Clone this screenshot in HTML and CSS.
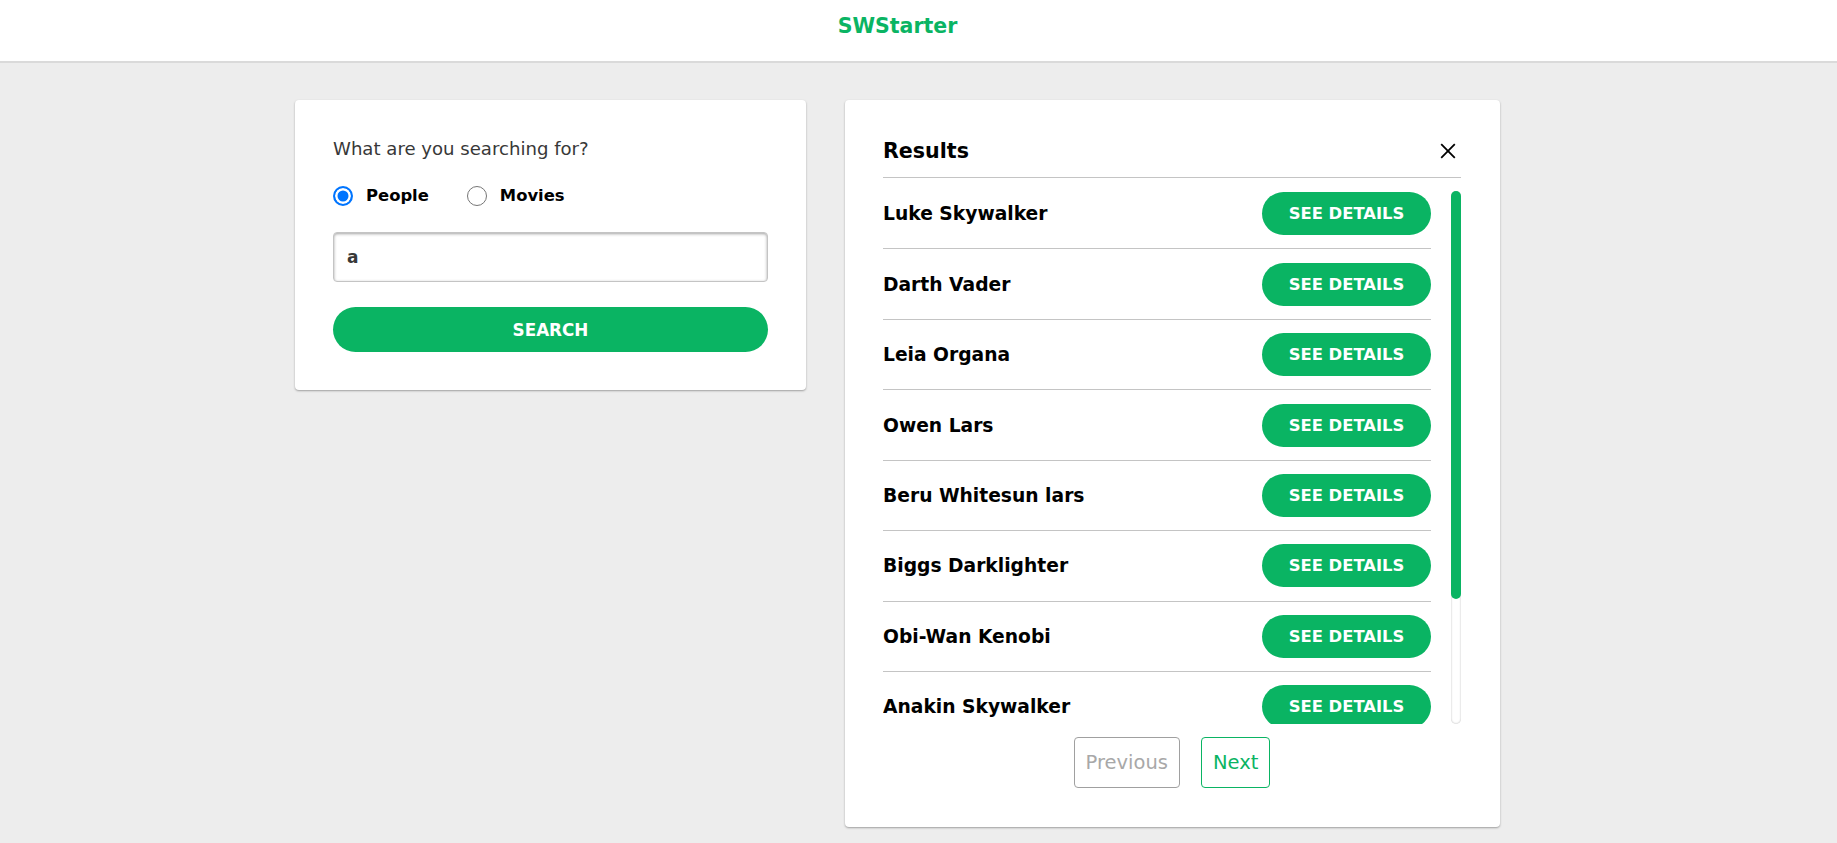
FILE: index.html
```html
<!DOCTYPE html>
<html lang="en">
<head>
<meta charset="utf-8">
<title>SWStarter</title>
<link rel="stylesheet" href="styles.css">
</head>
<body>
<header class="topbar"><span class="brand">SWStarter</span></header>
<main class="layout">
  <section class="card search-card">
    <p class="question">What are you searching for?</p>
    <div class="radios">
      <label class="radio"><input type="radio" name="kind" checked><span>People</span></label>
      <label class="radio"><input type="radio" name="kind"><span>Movies</span></label>
    </div>
    <input class="search-input" type="text" value="a">
    <button class="search-btn" type="button">SEARCH</button>
  </section>
  <section class="card results-card">
    <div class="results-head">
      <h2 class="results-title">Results</h2>
      <button class="close-btn" type="button" aria-label="Close">
        <svg width="16" height="16" viewBox="0 0 16 16"><path d="M1.2 1.2 L14.8 14.8 M14.8 1.2 L1.2 14.8" stroke="#000" stroke-width="1.8" fill="none"/></svg>
      </button>
    </div>
    <div class="results-body">
      <ul class="results-list">
        <li class="result-row"><span class="name">Luke Skywalker</span><button class="details-btn" type="button">SEE DETAILS</button></li>
        <li class="result-row"><span class="name">Darth Vader</span><button class="details-btn" type="button">SEE DETAILS</button></li>
        <li class="result-row"><span class="name">Leia Organa</span><button class="details-btn" type="button">SEE DETAILS</button></li>
        <li class="result-row"><span class="name">Owen Lars</span><button class="details-btn" type="button">SEE DETAILS</button></li>
        <li class="result-row"><span class="name">Beru Whitesun lars</span><button class="details-btn" type="button">SEE DETAILS</button></li>
        <li class="result-row"><span class="name">Biggs Darklighter</span><button class="details-btn" type="button">SEE DETAILS</button></li>
        <li class="result-row"><span class="name">Obi-Wan Kenobi</span><button class="details-btn" type="button">SEE DETAILS</button></li>
        <li class="result-row"><span class="name">Anakin Skywalker</span><button class="details-btn" type="button">SEE DETAILS</button></li>
        <li class="result-row"><span class="name">Wilhuff Tarkin</span><button class="details-btn" type="button">SEE DETAILS</button></li>
        <li class="result-row"><span class="name">Chewbacca</span><button class="details-btn" type="button">SEE DETAILS</button></li>
      </ul>
      <div class="scroll-rail" aria-hidden="true"><div class="scroll-thumb"></div></div>
    </div>
    <nav class="pager">
      <button class="pager-btn is-disabled" type="button">Previous</button>
      <button class="pager-btn is-active" type="button">Next</button>
    </nav>
  </section>
</main>
</body>
</html>
```
FILE: styles.css
```css
* { box-sizing: border-box; }

html, body { margin: 0; padding: 0; }

body {
  background: #ededed;
  font-family: "DejaVu Sans", "Liberation Sans", sans-serif;
  color: #000;
  min-height: 843px;
}

.topbar {
  height: 61px;
  padding: 16px 42px 0 0;
  background: #fff;
  text-align: center;
  box-shadow: 0 2px 0 0 #dadada;
  position: relative;
}

.brand {
  display: inline-block;
  font-size: 20.5px;
  line-height: 1;
  font-weight: bold;
  color: #0ab463;
}

.layout {
  display: flex;
  justify-content: center;
  align-items: flex-start;
  gap: 39px;
  padding: 39px 42px 0 0;
}

.card {
  background: #fff;
  border-radius: 4px;
  box-shadow: 0 1px 2px 0 rgba(132, 132, 132, 0.75);
}

.search-card {
  width: 511px;
  padding: 38px;
}

.question {
  margin: 0 0 26px;
  font-size: 18.1px;
  line-height: 22px;
  color: #383838;
}

.radios {
  display: flex;
  gap: 38px;
  height: 20px;
  margin-bottom: 26px;
}

.radio {
  display: flex;
  align-items: center;
  gap: 13px;
  font-size: 16.4px;
  font-weight: bold;
  line-height: 20px;
}

.radio input {
  appearance: none;
  -webkit-appearance: none;
  margin: 0;
  width: 20px;
  height: 20px;
  border-radius: 50%;
  border: 1.5px solid #767676;
  background: #fff;
}

.radio input:checked {
  border: 2px solid #0075ff;
  background: #0075ff;
  box-shadow: inset 0 0 0 2.5px #fff;
}

.search-input {
  display: block;
  width: 100%;
  height: 50px;
  margin: 0;
  padding: 0 13px;
  border: 1px solid #c4c4c4;
  border-radius: 4px;
  box-shadow: inset 0 1px 3px 0 rgba(132, 132, 132, 0.75);
  font-family: inherit;
  font-size: 17px;
  font-weight: bold;
  color: #383838;
  outline: none;
}

.search-btn {
  display: block;
  width: 100%;
  height: 45px;
  margin-top: 25px;
  border: 0;
  border-radius: 23px;
  background: #0ab463;
  color: #fff;
  font-family: inherit;
  font-size: 16.8px;
  font-weight: bold;
  cursor: pointer;
}

.results-card {
  width: 655px;
  padding: 38px 39px 39px 38px;
}

.results-head {
  display: flex;
  align-items: center;
  justify-content: space-between;
  padding-bottom: 13px;
  border-bottom: 1px solid #c4c4c4;
}

.results-title {
  margin: 0;
  font-size: 20.6px;
  line-height: 26px;
  font-weight: bold;
}

.close-btn {
  display: flex;
  padding: 0;
  margin-right: 5px;
  border: 0;
  background: none;
  cursor: pointer;
}

.results-body {
  display: flex;
  gap: 20px;
  height: 546px;
  padding-top: 1px;
}

.results-list {
  flex: 1;
  list-style: none;
  margin: 0;
  padding: 0;
  overflow: hidden;
}

.scroll-rail {
  width: 10px;
  margin-top: 12px;
  border-radius: 5px;
  box-shadow: inset 0 0 2px rgba(0, 0, 0, 0.3);
}

.scroll-thumb {
  height: 408px;
  border-radius: 5px;
  background: #0ab463;
}

.result-row {
  display: flex;
  align-items: center;
  justify-content: space-between;
  height: 70.45px;
  border-bottom: 1px solid #c4c4c4;
}

.name {
  font-size: 18.7px;
  font-weight: bold;
}

.details-btn {
  width: 169px;
  height: 43px;
  border: 0;
  border-radius: 22px;
  background: #0ab463;
  color: #fff;
  font-family: inherit;
  font-size: 16.4px;
  font-weight: bold;
  cursor: pointer;
}

.pager {
  display: flex;
  justify-content: center;
  gap: 21px;
  margin-top: 13px;
}

.pager-btn {
  height: 51px;
  padding: 0 11px;
  border-radius: 4px;
  background: #fff;
  font-family: inherit;
  font-size: 19.5px;
  cursor: pointer;
}

.pager-btn.is-disabled {
  border: 1px solid #a0a0a0;
  color: #a8a8a8;
}

.pager-btn.is-active {
  border: 1px solid #0ab463;
  color: #0ab463;
}
```
